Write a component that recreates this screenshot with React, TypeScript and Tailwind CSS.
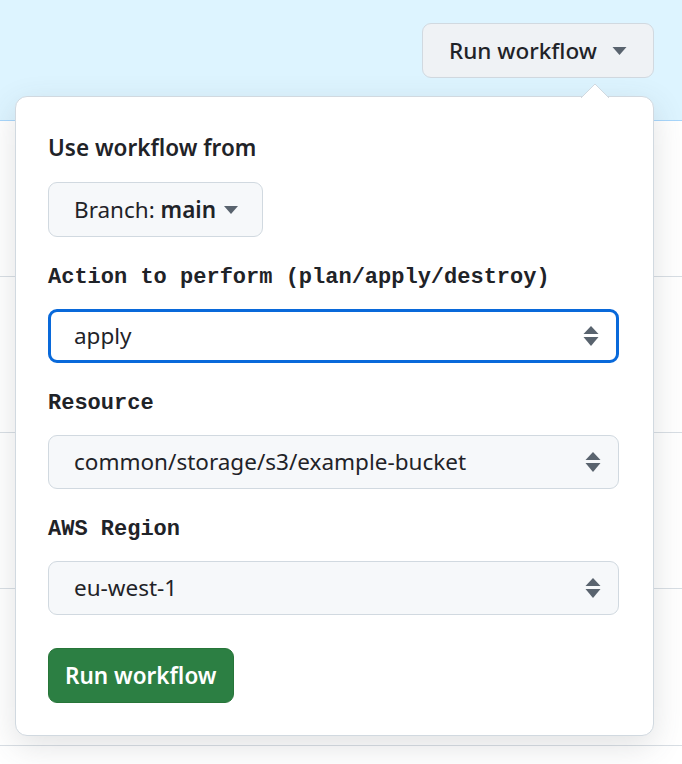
const Caret = ({ className = "" }: { className?: string }) => (
  <svg viewBox="0 0 14 8" className={className} fill="currentColor">
    <path d="M0 0h14L7 8z" />
  </svg>
);

const SortIcon = () => (
  <svg viewBox="0 0 16 20" className="h-[20px] w-[16px] text-[#59636e]" fill="currentColor">
    <path d="M8 0l7.5 8H.5z" />
    <path d="M.5 11h15L8 20z" />
  </svg>
);

const labelMono = "font-['Liberation_Mono',monospace] text-[22px] font-bold leading-[30px]";

function Select({ value, focused = false }: { value: string; focused?: boolean }) {
  return (
    <div
      className={`flex h-[54px] items-center justify-between rounded-[9px] pr-[17px] text-[22.5px] ${
        focused
          ? "border-[3px] border-[#0969da] bg-white pl-[23px]"
          : "border border-[#d1d9e0] bg-[#f6f8fa] pl-[25px]"
      }`}
    >
      <span>{value}</span>
      <SortIcon />
    </div>
  );
}

export default function App() {
  const fields = [
    { label: "Action to perform (plan/apply/destroy)", value: "apply", focused: true },
    { label: "Resource", value: "common/storage/s3/example-bucket" },
    { label: "AWS Region", value: "eu-west-1" },
  ];

  return (
    <div className="relative h-[764px] w-[682px] overflow-hidden bg-white font-['Noto_Sans',sans-serif] text-[#1f2328]">
      {/* header strip */}
      <div className="flex h-[121px] items-start justify-end border-b border-[#a8d6fb] bg-[#ddf4ff] pr-[28px] pt-[23px]">
        <button
          type="button"
          className="flex h-[55px] w-[232px] items-center gap-[15px] rounded-[9px] border border-[#d1d9e0] bg-[#eff2f5] pl-[26px] text-[22.5px] font-medium"
        >
          Run workflow
          <Caret className="h-[8px] w-[15px] text-[#59636e]" />
        </button>
      </div>

      {/* rows behind the menu */}
      <div className="h-[156px] border-b border-[#d8dee4]" />
      <div className="h-[156px] border-b border-[#d8dee4]" />
      <div className="h-[156px] border-b border-[#d8dee4]" />
      <div className="h-[157px] border-b border-[#d8dee4]" />

      {/* dropdown menu */}
      <div className="absolute left-[15px] top-[96px] w-[639px] rounded-[12px] border border-[#d1d9e0] bg-white pb-[32px] pl-[32px] pr-[34px] pt-[36px] shadow-[0_10px_32px_rgba(66,74,83,0.16)]">
        <svg
          viewBox="0 0 28 14"
          className="absolute right-[44px] top-[-13px] h-[14px] w-[28px]"
        >
          <path d="M0 14L14 0l14 14" fill="white" stroke="#d1d9e0" strokeWidth="1" />
        </svg>

        <div className="text-[22.5px] font-semibold leading-[30px]">Use workflow from</div>
        <button
          type="button"
          className="mt-[19px] flex h-[55px] items-center gap-[8px] rounded-[9px] border border-[#d1d9e0] bg-[#f6f8fa] pl-[25px] pr-[24px] text-[22.5px]"
        >
          <span>
            Branch: <span className="font-semibold">main</span>
          </span>
          <Caret className="h-[8px] w-[14px] text-[#59636e]" />
        </button>

        {fields.map((f) => (
          <div key={f.label} className="mt-[26px]">
            <div className={labelMono}>{f.label}</div>
            <div className="mt-[16px]">
              <Select value={f.value} focused={f.focused} />
            </div>
          </div>
        ))}

        <button
          type="button"
          className="mt-[33px] flex h-[55px] items-center rounded-[9px] border border-[#277539] bg-[#2c7f43] px-[16px] text-[22.5px] font-semibold text-white"
        >
          Run workflow
        </button>
      </div>
    </div>
  );
}
